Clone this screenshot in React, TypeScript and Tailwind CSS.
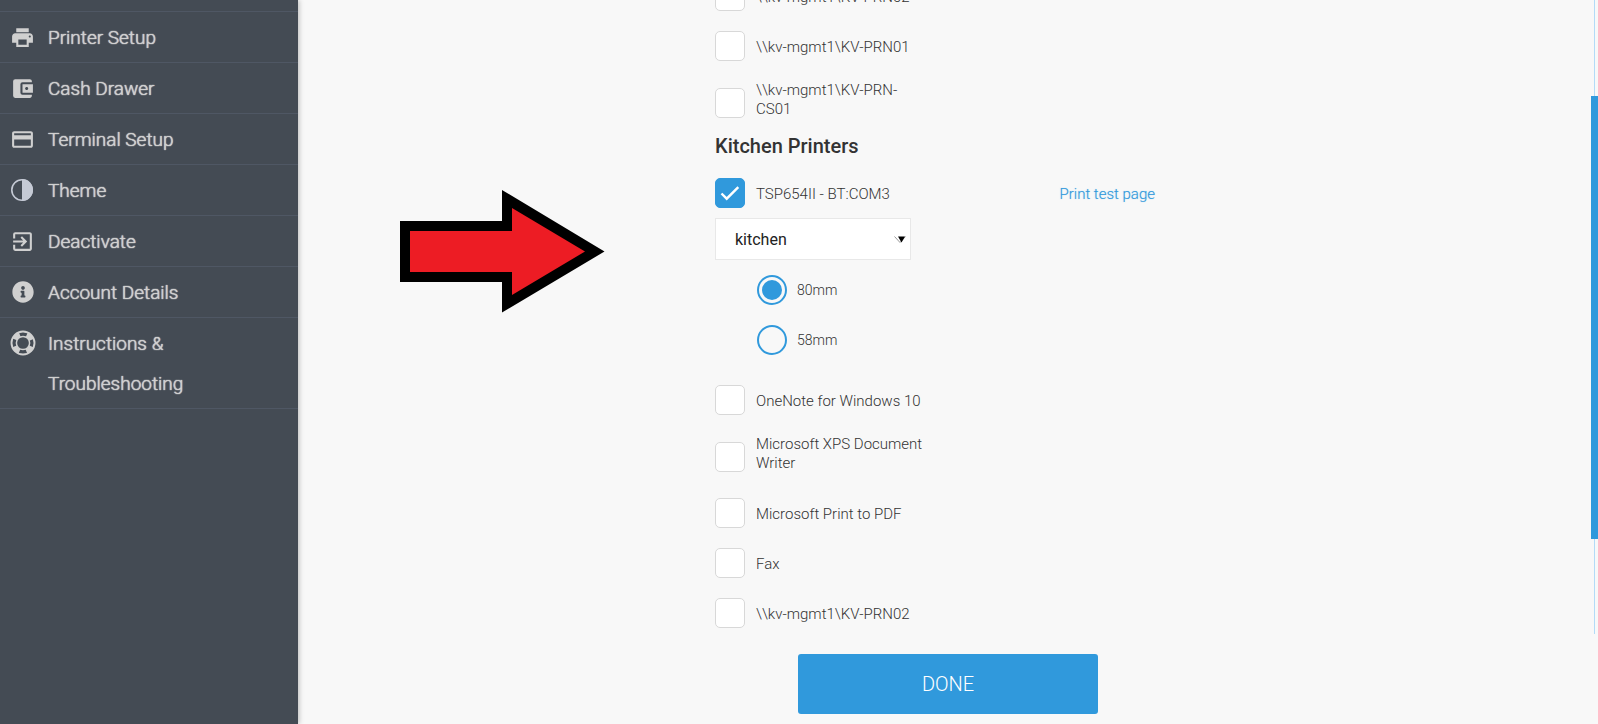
import type { ReactNode } from "react";
import { MdAccountBalanceWallet, MdCreditCard, MdExitToApp, MdPrint } from "react-icons/md";
import { FaInfoCircle } from "react-icons/fa";

function HalfCircleIcon() {
  return (
    <svg viewBox="0 0 24 24" className="size-6 text-[#c5cad5]" aria-hidden="true">
      <circle cx="11" cy="12" r="10.2" fill="none" stroke="currentColor" strokeWidth="1.6" />
      <path d="M11 1a11 11 0 0 1 0 22z" fill="currentColor" />
    </svg>
  );
}

function LifeRingIcon() {
  return (
    <svg viewBox="0 0 26 26" className="size-[26px]" fill="none" stroke="currentColor" aria-hidden="true">
      <circle cx="13" cy="13" r="11.5" strokeWidth="1.9" />
      <circle cx="13" cy="13" r="6.6" strokeWidth="1.5" />
      <circle cx="13" cy="13" r="9" strokeWidth="4.6" strokeDasharray="7.07 7.07" strokeDashoffset="-3.53" />
    </svg>
  );
}

const menu: { label: string; icon: ReactNode }[] = [
  { label: "Printer Setup", icon: <MdPrint size={25} /> },
  { label: "Cash Drawer", icon: <MdAccountBalanceWallet size={25} /> },
  { label: "Terminal Setup", icon: <MdCreditCard size={25} /> },
  { label: "Theme", icon: <HalfCircleIcon /> },
  { label: "Deactivate", icon: <MdExitToApp size={25} /> },
  { label: "Account Details", icon: <FaInfoCircle size={22} /> },
  { label: "Instructions & Troubleshooting", icon: <LifeRingIcon /> },
];

function Sidebar() {
  return (
    <nav className="z-10 w-[298px] shrink-0 bg-[#444b54] pt-[11px] text-[#d0d0d0] shadow-[1px_0_5px_rgba(0,0,0,0.25)]">
      <ul className="border-t border-[#4f5764]">
        {menu.map((item) => (
          <li key={item.label} className="border-b border-[#4f5764]">
            <a href="#" className="flex items-start pt-[5px] pb-1">
              <span className="flex h-10 w-12 shrink-0 items-center justify-center pr-[3px]">{item.icon}</span>
              <span className="w-40 pt-px text-[19px] leading-10 font-light [text-shadow:0_0_1px_currentColor,0_0_1px_currentColor]">{item.label}</span>
            </a>
          </li>
        ))}
      </ul>
    </nav>
  );
}

type PrinterOptionProps = { label: string; checked?: boolean; twoLines?: boolean; children?: ReactNode };

function PrinterOption({ label, checked = false, twoLines = false, children }: PrinterOptionProps) {
  return (
    <div className="flex items-center justify-between py-2.5">
      <label className="flex items-center gap-[11px]">
        <span className="grid shrink-0 place-items-center">
          <input
            type="checkbox"
            defaultChecked={checked}
            className="peer col-start-1 row-start-1 size-[30px] appearance-none rounded-[5px] border border-[#d8d8d8] bg-white checked:border-[#3099dc] checked:bg-[#3099dc]"
          />
          <svg viewBox="0 0 30 30" className="pointer-events-none col-start-1 row-start-1 hidden size-[30px] peer-checked:block" aria-hidden="true">
            <path d="M6.5 15.5l5.2 5.2L23.3 9.2" fill="none" stroke="#fff" strokeWidth="2.4" />
          </svg>
        </span>
        <span className={twoLines ? "w-[168px] pb-[5px]" : "w-[168px] pt-0.5"}>{label}</span>
      </label>
      {children}
    </div>
  );
}

function PaperOption({ label, checked = false }: { label: string; checked?: boolean }) {
  return (
    <label className="flex h-[50px] items-center gap-2.5 text-sm">
      <input
        type="radio"
        name="paper-width"
        defaultChecked={checked}
        className="size-[30px] appearance-none rounded-full border-2 border-[#3099dc] bg-transparent bg-clip-content p-[3px] checked:bg-[#3099dc]"
      />
      {label}
    </label>
  );
}

function PrinterForm() {
  return (
    <form className="mx-auto -mt-[29px] w-full max-w-[466px] text-[15px] leading-[19px] font-light text-[#333]">
      <PrinterOption label="\\kv-mgmt1\KV-PRN02" />
      <PrinterOption label="\\kv-mgmt1\KV-PRN01" />
      <PrinterOption label="\\kv-mgmt1\KV-PRN-CS01" twoLines />
      <h2 className="mb-2.5 text-xl leading-6 font-medium">Kitchen Printers</h2>
      <PrinterOption label="TSP654II - BT:COM3" checked>
        <a href="#" className="pt-0.5 pr-[26px] text-[#3099dc] [text-shadow:0_0_1px_#3099dc80]">Print test page</a>
      </PrinterOption>
      <div className="grid w-[196px] items-center">
        <select
          aria-label="Printer role"
          className="col-start-1 row-start-1 h-[42px] appearance-none border border-[#e8e8e8] bg-white pt-0.5 pl-[19px] text-base font-normal text-[#222]"
        >
          <option>kitchen</option>
        </select>
        <svg viewBox="0 0 12 7" className="pointer-events-none col-start-1 row-start-1 mr-[5px] h-[7px] w-3 justify-self-end" aria-hidden="true">
          <path d="M0.5 0.5L6 6.5L11.5 0.5" fill="none" stroke="#999" />
          <path d="M4 0.5h7L7.5 6.5z" fill="#000" />
        </svg>
      </div>
      <fieldset aria-label="Paper width" className="mt-[5px] mb-2.5 pl-[42px]">
        <PaperOption label="80mm" checked />
        <PaperOption label="58mm" />
      </fieldset>
      <PrinterOption label="OneNote for Windows 10" />
      <PrinterOption label="Microsoft XPS Document Writer" twoLines />
      <PrinterOption label="Microsoft Print to PDF" />
      <PrinterOption label="Fax" />
      <PrinterOption label="\\kv-mgmt1\KV-PRN02" />
    </form>
  );
}

export default function App() {
  return (
    <div className="flex h-screen bg-[#f8f8f8] font-[Roboto,sans-serif]">
      <Sidebar />
      <main className="relative flex min-w-0 flex-1 flex-col">
        <section className="relative min-h-0 flex-1 overflow-hidden">
          <PrinterForm />
          <div className="absolute inset-y-0 right-0 w-[7px]">
            <div className="ml-[3px] h-full w-px bg-[#b3dbf7]" />
            <div className="absolute inset-x-0 top-[96px] h-[443px] bg-[#3099dc]" />
          </div>
        </section>
        <footer className="flex justify-center pt-5 pb-2.5">
          <button type="button" className="h-[60px] w-[300px] rounded-[3px] bg-[#3099dc] text-xl font-light text-white">
            DONE
          </button>
        </footer>
        <svg viewBox="0 0 205 123" className="pointer-events-none absolute top-[190px] left-[102px] w-[205px]" aria-hidden="true">
          <path d="M0 31H102V0L204.5 61.5L102 122.5V92H0z" fill="#000" />
          <path d="M10 41H112V18L185 61.5L112 105V82H10z" fill="#ed1c24" />
        </svg>
      </main>
    </div>
  );
}
